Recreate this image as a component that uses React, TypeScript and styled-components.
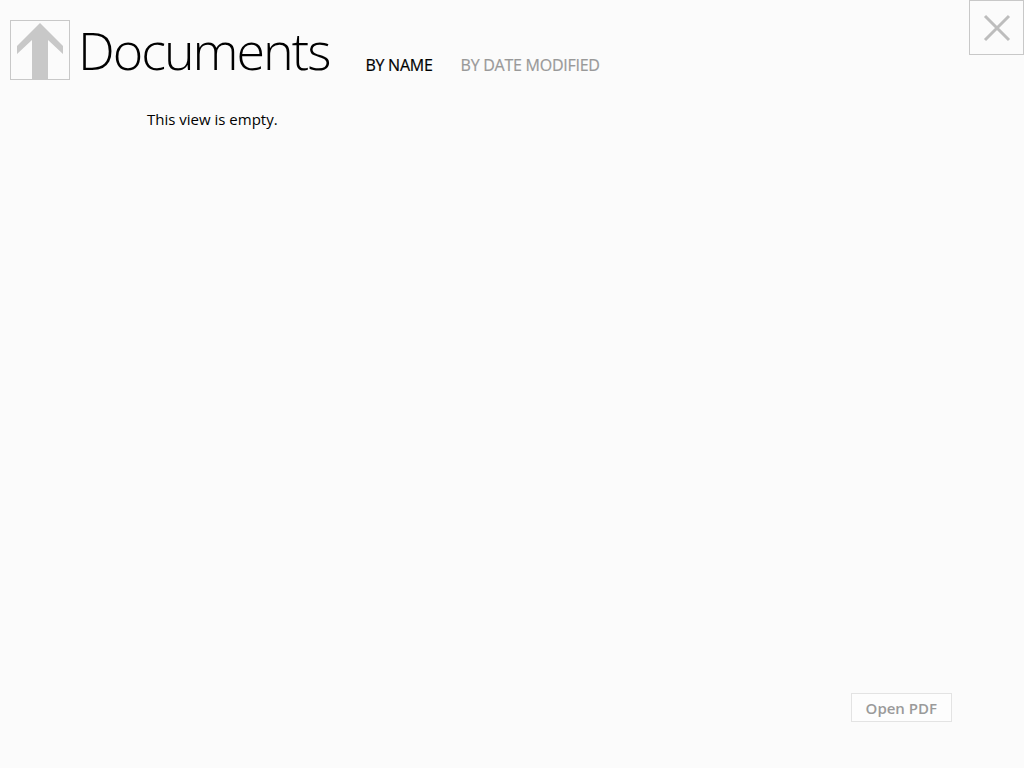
import React from 'react'
import styled, {createGlobalStyle} from 'styled-components'

const GlobalStyle = createGlobalStyle`
	html, body {
		margin: 0;
		padding: 0;
		height: 100%;
		background: #fbfbfb;
	}
	#root {
		height: 100%;
	}
`

const Page = styled.div`
	position: relative;
	height: 768px;
	display: flex;
	flex-direction: column;
	font-family: "Open Sans", "Noto Sans", sans-serif;
	color: #000;
	box-sizing: border-box;
`

const Header = styled.div`
	display: flex;
	align-items: flex-end;
	height: 60px;
	padding: 20px 0 0 10px;
`

const UpButton = styled.button`
	width: 60px;
	height: 60px;
	box-sizing: border-box;
	border: 1px solid #c8c8c8;
	background: transparent;
	padding: 0;
	display: flex;
	align-items: center;
	justify-content: center;
	cursor: pointer;
	flex-shrink: 0;
`

const Title = styled.h1`
	margin: 0 0 0 8px;
	font-weight: 300;
	font-size: 52px;
	line-height: 60px;
	letter-spacing: -2px;
	height: 60px;
	align-self: flex-start;
`

const Tabs = styled.div`
	display: flex;
	gap: 28px;
	margin: 0 0 5px 36px;
`

const Tab = styled.span<{active?: boolean}>`
	font-size: 16px;
	font-weight: 400;
	letter-spacing: -0.25px;
	color: ${props => props.active ? '#000' : '#999'};
	cursor: pointer;
	line-height: 20px;
	-webkit-text-stroke: 0.2px currentColor;
`

const CloseButton = styled.button`
	position: absolute;
	top: 0;
	right: 0;
	width: 55px;
	height: 55px;
	box-sizing: border-box;
	border: 1px solid #c8c8c8;
	background: transparent;
	padding: 0;
	display: flex;
	align-items: center;
	justify-content: center;
	cursor: pointer;
`

const Empty = styled.p`
	margin: 29px 0 0 147px;
	font-size: 15px;
	line-height: 20px;
`

const Footer = styled.div`
	margin-top: auto;
	display: flex;
	justify-content: flex-end;
	padding: 0 72px 46px 0;
`

const OpenButton = styled.button`
	border: 1px solid #e3e3e3;
	background: #fdfdfd;
	color: #9a9a9a;
	font-family: "Open Sans", "Noto Sans", sans-serif;
	font-weight: 600;
	font-size: 15px;
	height: 29px;
	padding: 0 14px;
	cursor: pointer;
`

const UpArrow = () => (
	<svg width="48" height="58" viewBox="0 0 48 58">
		<polygon points="24,2 47,25 47,33 32,19 32,58 16,58 16,19 1,33 1,25" fill="#c8c8c8"/>
	</svg>
)

const CloseIcon = () => (
	<svg width="28" height="28" viewBox="0 0 28 28">
		<path d="M2 2 L26 26 M26 2 L2 26" stroke="#bdbdbd" strokeWidth="3" fill="none"/>
	</svg>
)

const App = () => {
	return (
		<Page>
			<GlobalStyle/>
			<Header>
				<UpButton><UpArrow/></UpButton>
				<Title>Documents</Title>
				<Tabs>
					<Tab active>BY NAME</Tab>
					<Tab>BY DATE MODIFIED</Tab>
				</Tabs>
			</Header>
			<Empty>This view is empty.</Empty>
			<Footer>
				<OpenButton>Open PDF</OpenButton>
			</Footer>
			<CloseButton><CloseIcon/></CloseButton>
		</Page>
	)
}

export default App
